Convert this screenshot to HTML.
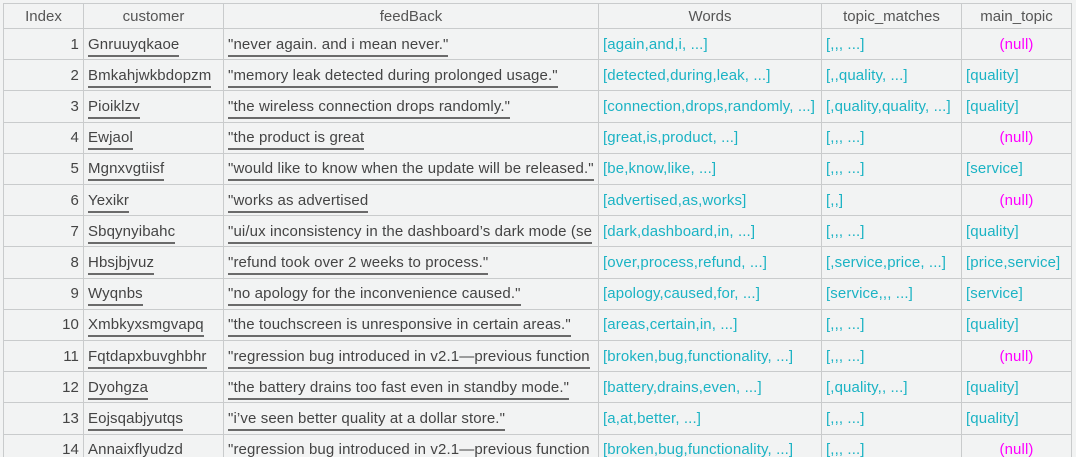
<!DOCTYPE html><html><head><style>
html,body{margin:0;width:1076px;height:457px;overflow:hidden}
body{background:#f2f3f3;font-family:"Liberation Sans",sans-serif;font-size:15px;letter-spacing:0.12px;color:#444;position:relative}
.c{position:absolute;box-sizing:border-box;border-right:1px solid #c9cbcc;border-bottom:1px solid #c9cbcc;white-space:nowrap;overflow:hidden;padding:0 4px;display:flex;align-items:center}
.h{justify-content:center;color:#555;letter-spacing:0}
.r{justify-content:flex-end}
.u{border-bottom:2px solid #6a6a6a;line-height:20px;margin-top:3px}
.cy{color:#1bb3c4}.mg{color:#f0f;justify-content:center}
</style></head><body>
<div style="position:absolute;left:3px;top:3px;width:1069px;height:1px;background:#c9cbcc"></div>
<div style="position:absolute;left:3px;top:3px;width:1px;height:460px;background:#c9cbcc"></div>
<div id="t"></div>
<script>
var cols=[[4,84],[84,224],[224,599],[599,822],[822,962],[962,1072]];
var hd=["Index","customer","feedBack","Words","topic_matches","main_topic"];
var rows=[
["Gnruuyqkaoe",'"never again. and i mean never."',"[again,and,i, ...]","[,,, ...]","(null)"],
["Bmkahjwkbdopzm",'"memory leak detected during prolonged usage."',"[detected,during,leak, ...]","[,,quality, ...]","[quality]"],
["Pioiklzv",'"the wireless connection drops randomly."',"[connection,drops,randomly, ...]","[,quality,quality, ...]","[quality]"],
["Ewjaol",'"the product is great',"[great,is,product, ...]","[,,, ...]","(null)"],
["Mgnxvgtiisf",'"would like to know when the update will be released."',"[be,know,like, ...]","[,,, ...]","[service]"],
["Yexikr",'"works as advertised',"[advertised,as,works]","[,,]","(null)"],
["Sbqynyibahc",'"ui/ux inconsistency in the dashboard\u2019s dark mode (se',"[dark,dashboard,in, ...]","[,,, ...]","[quality]"],
["Hbsjbjvuz",'"refund took over 2 weeks to process."',"[over,process,refund, ...]","[,service,price, ...]","[price,service]"],
["Wyqnbs",'"no apology for the inconvenience caused."',"[apology,caused,for, ...]","[service,,, ...]","[service]"],
["Xmbkyxsmgvapq",'"the touchscreen is unresponsive in certain areas."',"[areas,certain,in, ...]","[,,, ...]","[quality]"],
["Fqtdapxbuvghbhr",'"regression bug introduced in v2.1\u2014previous function',"[broken,bug,functionality, ...]","[,,, ...]","(null)"],
["Dyohgza",'"the battery drains too fast even in standby mode."',"[battery,drains,even, ...]","[,quality,, ...]","[quality]"],
["Eojsqabjyutqs",'"i\u2019ve seen better quality at a dollar store."',"[a,at,better, ...]","[,,, ...]","[quality]"],
["Annaixflyudzd",'"regression bug introduced in v2.1\u2014previous function',"[broken,bug,functionality, ...]","[,,, ...]","(null)"]];
var h="";
function cell(i,top,ht,cls,txt){h+='<div class="c '+cls+'" style="left:'+cols[i][0]+'px;width:'+(cols[i][1]-cols[i][0])+'px;top:'+top+'px;height:'+ht+'px">'+txt+'</div>';}
for(var i=0;i<6;i++)cell(i,4,25,"h",hd[i]);
rows.forEach(function(r,k){var t=29+k*31.2,H=31.2;
cell(0,t,H,"r",k+1);
cell(1,t,H,"",'<span class="u">'+r[0]+'</span>');
cell(2,t,H,"",'<span class="u">'+r[1]+'</span>');
cell(3,t,H,"cy",r[2]);cell(4,t,H,"cy",r[3]);
cell(5,t,H,r[4]=="(null)"?"mg":"cy",r[4]);});
document.getElementById("t").innerHTML=h;
</script></body></html>
